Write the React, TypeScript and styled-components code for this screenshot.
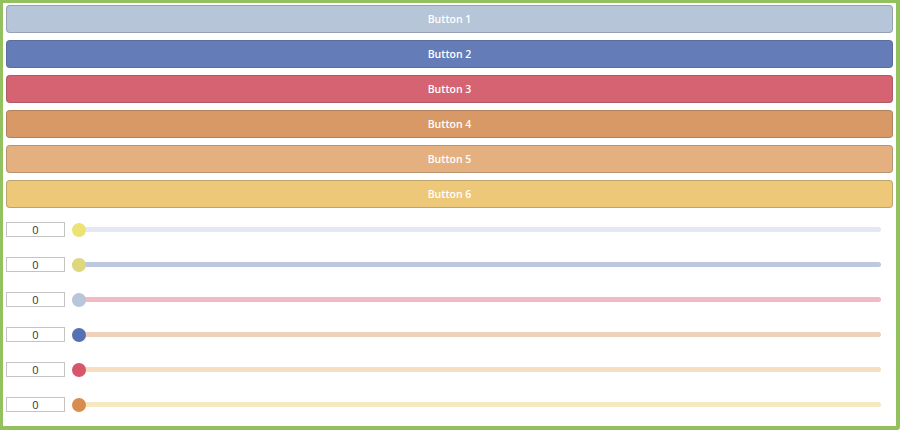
import React from 'react';
import styled, { createGlobalStyle } from 'styled-components';

const GlobalStyle = createGlobalStyle`
    html, body {
        margin: 0;
        padding: 0;
        background: #ffffff;
    }
    * {
        box-sizing: border-box;
    }
`

const Frame = styled.div`
    width: 900px;
    height: 430px;
    border: 3px solid #93c160;
    border-right-width: 4px;
    border-bottom-width: 4px;
    border-radius: 0 0 3px 0;
    padding: 2px 3px 0 3px;
    background: #ffffff;
    display: flex;
    flex-direction: column;
    font-family: "Open Sans", "Liberation Sans", sans-serif;
`

const ButtonStack = styled.div`
    display: flex;
    flex-direction: column;
    gap: 7px;
`

const ColorButton = styled.button<{ $bg: string }>`
    height: 28px;
    width: 100%;
    border: 1px solid rgba(70, 70, 80, 0.28);
    border-radius: 4px;
    background-color: ${p => p.$bg};
    color: #ffffff;
    font-family: "Open Sans", "Liberation Sans", sans-serif;
    font-size: 10.5px;
    font-weight: 600;
    padding: 0;
    cursor: pointer;
`

const SliderStack = styled.div`
    display: flex;
    flex-direction: column;
    margin-top: 4px;
`

const SliderRow = styled.div`
    height: 35px;
    display: flex;
    align-items: center;
    gap: 7px;
    padding-right: 12px;
`

const ValueBox = styled.input`
    width: 59px;
    height: 15px;
    border: 1px solid #c4c4c4;
    background: #ffffff;
    font-family: "Open Sans", "Liberation Sans", sans-serif;
    font-size: 11px;
    color: #333333;
    text-align: center;
    padding: 0;
    outline: none;
`

const Track = styled.div<{ $color: string }>`
    flex: 1;
    height: 5px;
    border-radius: 3px;
    background-color: ${p => p.$color};
    position: relative;
`

const Thumb = styled.div<{ $color: string }>`
    position: absolute;
    left: 0;
    top: 50%;
    width: 14px;
    height: 14px;
    margin-top: -7px;
    border-radius: 50%;
    background-color: ${p => p.$color};
`

const buttons = [
    { label: 'Button 1', bg: '#b7c5d9' },
    { label: 'Button 2', bg: '#647db9' },
    { label: 'Button 3', bg: '#d56371' },
    { label: 'Button 4', bg: '#d99966' },
    { label: 'Button 5', bg: '#e5b07f' },
    { label: 'Button 6', bg: '#edc879' },
]

const sliders = [
    { track: '#e3e8f2', thumb: '#ede374' },
    { track: '#bdc7df', thumb: '#ddd87b' },
    { track: '#f3b9c2', thumb: '#b8c6da' },
    { track: '#efd1b9', thumb: '#5670b4' },
    { track: '#f6dfc1', thumb: '#d6566a' },
    { track: '#f6e8c3', thumb: '#d98c4f' },
]

export default function App() {
    return (
        <>
            <GlobalStyle />
            <Frame>
                <ButtonStack>
                    {buttons.map(b => (
                        <ColorButton key={b.label} $bg={b.bg}>{b.label}</ColorButton>
                    ))}
                </ButtonStack>
                <SliderStack>
                    {sliders.map((s, i) => (
                        <SliderRow key={i}>
                            <ValueBox readOnly value="0" />
                            <Track $color={s.track}>
                                <Thumb $color={s.thumb} />
                            </Track>
                        </SliderRow>
                    ))}
                </SliderStack>
            </Frame>
        </>
    );
}
